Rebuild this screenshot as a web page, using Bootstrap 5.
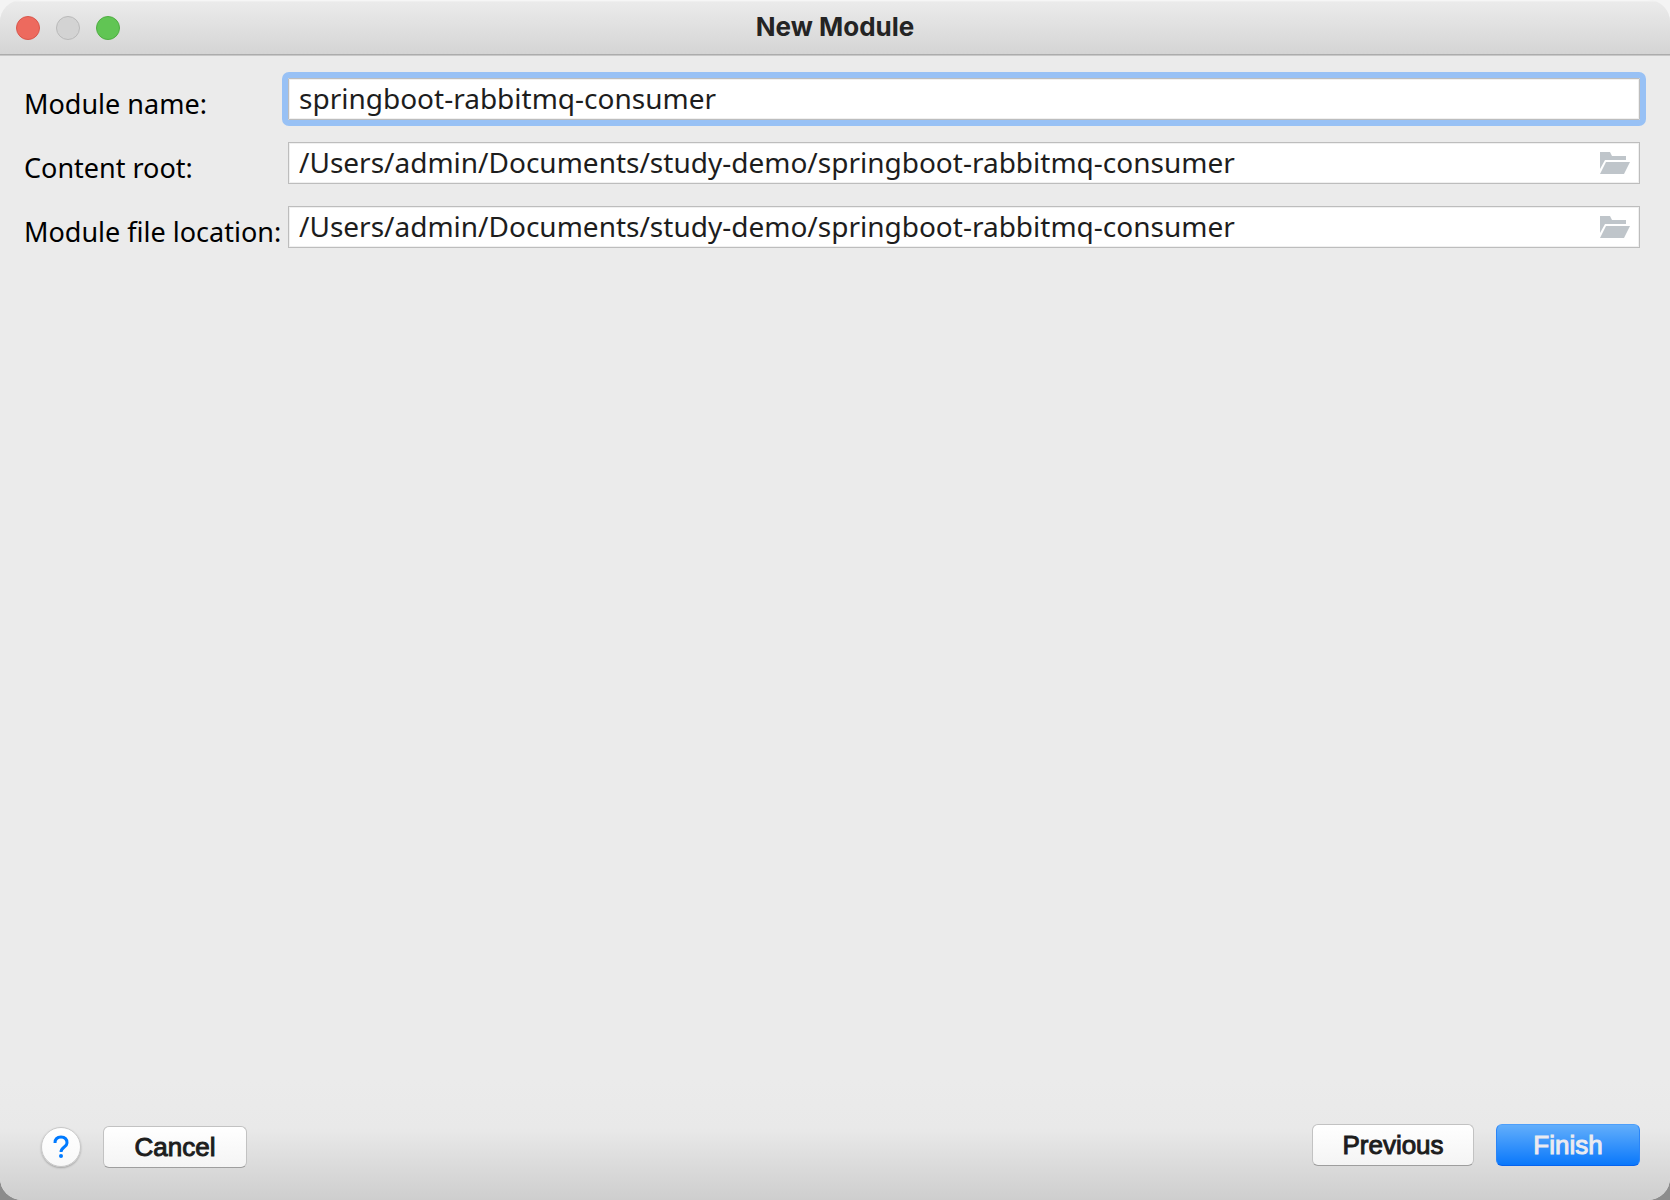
<!DOCTYPE html>
<html lang="en">
<head>
<meta charset="utf-8">
<meta name="viewport" content="width=device-width, initial-scale=1">
<title>New Module</title>
<link rel="stylesheet" href="https://cdn.jsdelivr.net/npm/bootstrap@5.3.0/dist/css/bootstrap.min.css">
<style>
  body { background: linear-gradient(#f4f4f4 50%, #8c8c8c 50%); font-family: "Noto Sans", "Open Sans", sans-serif; color: #000; }
  .dialog-window { background: #ebebeb; border-radius: 22px; overflow: hidden; }
  .title-bar { height: 56px; padding: 0 16px; background: linear-gradient(#f9f9f9 0, #f3f3f3 1px, #ebebeb 2px, #d4d4d4 100%); border-bottom: 1px solid #c8c8c8; box-shadow: inset 0 -1px #acacac; }
  .title-text { padding-bottom: 2px; font: 700 26px/32px Inter, sans-serif; color: #242424; }
  .traffic { width: 24px; height: 24px; padding: 0; border: 1px solid #b9b9b9; border-radius: 50%; background: #d3d3d3; }
  .traffic-close { background: #ed6a5e; border-color: #d8574c; }
  .traffic-zoom { background: #61c554; border-color: #4fad42; }
  .window-side { width: 120px; }
  .form-area { padding: 22px 30px 22px 24px; display: grid; gap: 22px; }
  .field-row { display: grid; grid-template-columns: 264px minmax(0, 1fr); }
  .field-label { padding-top: 10px; font-size: 27px; line-height: 32px; white-space: nowrap; }
  .field-box { height: 42px; background: #fff; border: 1px solid #bdbdbd; box-shadow: inset 0 0 0 1px #f0f0f0; }
  .field-box input { border: 0; outline: 0; background: transparent; padding: 0 10px 2px; font-size: 28px; line-height: 38px; height: 40px; color: #1d1d1d; min-width: 0; }
  .field-focus { outline: 6px solid #98c1f5; border-radius: 1px; }
  .browse-btn { width: 30px; height: 22px; padding: 0; margin-right: 9px; border: 0; background: none; line-height: 0; }
  .action-bar { padding: 44px 30px 32px 41px; background: linear-gradient(#ebebeb 0, #e9e9e9 40%, #cecece 100%); }
  .button-group { gap: 22px; }
  .nav-group { padding-bottom: 2px; }
  .push-btn { height: 42px; padding: 0 0 1px; border-radius: 6px; border: 1px solid #c2c2c2; border-bottom-color: #9e9e9e; background: linear-gradient(#fff, #f4f4f4); color: #1d1d1d; font: 400 26px/38px "Liberation Sans", Arial, sans-serif; -webkit-text-stroke: 1px currentColor; }
  .push-small { width: 144px; }
  .push-wide { width: 162px; }
  .push-default { background: linear-gradient(#62aefb, #0a78fb); border-color: #4d9ffa #2a85f8 #0563ee; color: #ebebf0; }
  .help-btn { width: 40px; height: 40px; padding: 0; border: 1px solid #c8c8c8; border-radius: 50%; background: linear-gradient(#fff, #f8f8f8); box-shadow: 0 1px 2px #00000040; line-height: 0; }
</style>
<script src="https://cdn.jsdelivr.net/npm/bootstrap@5.3.0/dist/js/bootstrap.bundle.min.js"></script>
</head>
<body>
<div class="dialog-window min-vh-100 d-flex flex-column">
  <header class="title-bar d-flex align-items-center justify-content-between">
    <div class="window-side d-flex gap-3">
      <button type="button" class="traffic traffic-close" aria-label="Close"></button>
      <button type="button" class="traffic" aria-label="Minimize" disabled></button>
      <button type="button" class="traffic traffic-zoom" aria-label="Zoom"></button>
    </div>
    <h1 class="title-text m-0">New Module</h1>
    <div class="window-side"></div>
  </header>
  <form class="d-flex flex-column flex-grow-1" onsubmit="return false">
    <div class="form-area">
      <div class="field-row">
        <label class="field-label" for="moduleName">Module name:</label>
        <div class="field-box field-focus d-flex"><input class="flex-grow-1" type="text" id="moduleName" value="springboot-rabbitmq-consumer" spellcheck="false"></div>
      </div>
      <div class="field-row">
        <label class="field-label" for="contentRoot">Content root:</label>
        <div class="field-box d-flex align-items-center">
          <input class="flex-grow-1" type="text" id="contentRoot" value="/Users/admin/Documents/study-demo/springboot-rabbitmq-consumer" spellcheck="false">
          <button type="button" class="browse-btn" aria-label="Browse content root"><svg width="30" height="22" viewBox="0 0 30 22" fill="#bfc5ca"><path d="M0 0h10l2 4h14v4H5L0 17z"/><path d="M6 10h24l-6 12H0z"/></svg></button>
        </div>
      </div>
      <div class="field-row">
        <label class="field-label" for="fileLocation">Module file location:</label>
        <div class="field-box d-flex align-items-center">
          <input class="flex-grow-1" type="text" id="fileLocation" value="/Users/admin/Documents/study-demo/springboot-rabbitmq-consumer" spellcheck="false">
          <button type="button" class="browse-btn" aria-label="Browse module file location"><svg width="30" height="22" viewBox="0 0 30 22" fill="#bfc5ca"><path d="M0 0h10l2 4h14v4H5L0 17z"/><path d="M6 10h24l-6 12H0z"/></svg></button>
        </div>
      </div>
    </div>
    <footer class="action-bar d-flex align-items-end justify-content-between mt-auto">
      <div class="button-group d-flex align-items-center">
        <button type="button" class="help-btn" aria-label="Help"><svg width="16" height="24" viewBox="0 0 16 24" fill="none"><path d="M2 8C2 4 4 2 8 2s6 2 6 6c0 4-6 4-6 9" stroke="#007aff" stroke-width="3"/><circle cx="8" cy="21" r="2" fill="#007aff"/></svg></button>
        <button type="button" class="push-btn push-small">Cancel</button>
      </div>
      <div class="button-group nav-group d-flex">
        <button type="button" class="push-btn push-wide">Previous</button>
        <button type="submit" class="push-btn push-small push-default">Finish</button>
      </div>
    </footer>
  </form>
</div>
</body>
</html>
